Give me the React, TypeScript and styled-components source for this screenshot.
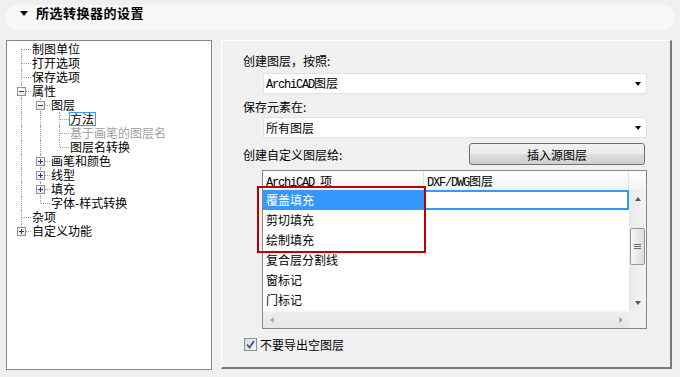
import styled, { createGlobalStyle } from "styled-components";

const GlobalStyle = createGlobalStyle`
  html, body {
    margin: 0;
    padding: 0;
    background: #f0f0f0;
  }
  body {
    font-family: "Noto Sans CJK SC", "Liberation Sans", sans-serif;
    font-size: 12px;
    color: #000;
  }
`;

const Window = styled.div`
  width: 680px;
  height: 377px;
  overflow: hidden;
  background: #f0f0f0;
  display: flex;
  flex-direction: column;
`;

const SectionBar = styled.div`
  margin: 5px 5px 0;
  height: 25px;
  box-sizing: border-box;
  padding-left: 15px;
  border-radius: 12px;
  background: #f7f7f7;
  display: flex;
  align-items: flex-start;
  gap: 8px;
`;

const Caret = styled.span`
  width: 0;
  height: 0;
  margin-top: 6px;
  border-left: 4px solid transparent;
  border-right: 4px solid transparent;
  border-top: 5px solid #000;
`;

const SectionTitle = styled.span`
  font-weight: 700;
  font-size: 13px;
  line-height: 16px;
  letter-spacing: 0.5px;
`;

const Body = styled.div`
  display: flex;
  gap: 9px;
  margin-top: 10px;
  padding-left: 6px;
`;

/* ---------- tree ---------- */

const TreePanel = styled.div`
  width: 206px;
  height: 330px;
  box-sizing: border-box;
  border: 1px solid #828790;
  background: #fff;
  padding: 1px 0 0 5px;
`;

const TreeRow = styled.div`
  display: flex;
  height: 14px;
`;

type Kind = "first" | "tee" | "pipe" | "corner";

const Guide = styled.span<{ $kind: Kind }>`
  position: relative;
  flex: none;
  width: 19px;
  height: 14px;

  &::before {
    content: "";
    position: absolute;
    left: 9px;
    top: ${(p) => (p.$kind === "first" ? "7px" : "0")};
    bottom: ${(p) => (p.$kind === "corner" ? "7px" : "0")};
    border-left: 1px dotted #a0a0a0;
  }

  &::after {
    content: "";
    position: absolute;
    left: 10px;
    right: 0;
    top: 7px;
    border-top: 1px dotted #a0a0a0;
    display: ${(p) => (p.$kind === "pipe" ? "none" : "block")};
  }
`;

const Expander = styled.span<{ $open: boolean }>`
  position: absolute;
  left: 5px;
  top: 3px;
  width: 9px;
  height: 9px;
  box-sizing: border-box;
  border: 1px solid #919191;
  background: linear-gradient(135deg, #ffffff, #e2e2e2);
  z-index: 1;

  &::before {
    content: "";
    position: absolute;
    left: 1px;
    top: 3px;
    width: 5px;
    height: 1px;
    background: #1f3a87;
  }

  &::after {
    content: "";
    position: absolute;
    left: 3px;
    top: 1px;
    width: 1px;
    height: 5px;
    background: #1f3a87;
    display: ${(p) => (p.$open ? "none" : "block")};
  }
`;

const NodeLabel = styled.span<{ $selected?: boolean; $disabled?: boolean }>`
  height: 14px;
  box-sizing: border-box;
  line-height: 12px;
  padding: 0 1px 0 0;
  white-space: nowrap;
  border: 1px solid ${(p) => (p.$selected ? "#3399ff" : "transparent")};
  color: ${(p) => (p.$disabled ? "#a0a0a0" : "#000")};
`;

interface TreeNode {
  label: string;
  guides: Kind[];
  box?: "plus" | "minus";
  selected?: boolean;
  disabled?: boolean;
}

const treeNodes: TreeNode[] = [
  { label: "制图单位", guides: ["first"] },
  { label: "打开选项", guides: ["tee"] },
  { label: "保存选项", guides: ["tee"] },
  { label: "属性", guides: ["tee"], box: "minus" },
  { label: "图层", guides: ["pipe", "tee"], box: "minus" },
  { label: "方法", guides: ["pipe", "pipe", "tee"], selected: true },
  { label: "基于画笔的图层名", guides: ["pipe", "pipe", "tee"], disabled: true },
  { label: "图层名转换", guides: ["pipe", "pipe", "corner"] },
  { label: "画笔和颜色", guides: ["pipe", "tee"], box: "plus" },
  { label: "线型", guides: ["pipe", "tee"], box: "plus" },
  { label: "填充", guides: ["pipe", "tee"], box: "plus" },
  { label: "字体-样式转换", guides: ["pipe", "corner"] },
  { label: "杂项", guides: ["tee"] },
  { label: "自定义功能", guides: ["corner"], box: "plus" },
];

/* ---------- settings panel ---------- */

const SettingsPanel = styled.div`
  width: 451px;
  height: 329px;
  box-sizing: border-box;
  border-style: solid;
  border-width: 1px 2px 2px 1px;
  border-color: #ffffff #7a7a7a #7a7a7a #ffffff;
  padding: 0 23px 0 21px;
  display: flex;
  flex-direction: column;
`;

const FieldLabel = styled.div<{ $top: number; $bottom: number }>`
  height: 14px;
  line-height: 14px;
  margin-top: ${(p) => p.$top}px;
  margin-bottom: ${(p) => p.$bottom}px;
`;

const Select = styled.div`
  margin-left: 20px;
  height: 21px;
  box-sizing: border-box;
  background: #fff;
  border: 1px solid #e1e2e6;
  display: flex;
  align-items: center;
  justify-content: space-between;
  padding: 0 5px 0 2px;
  line-height: 19px;
`;

const SelectArrow = styled.span`
  width: 0;
  height: 0;
  border-left: 3px solid transparent;
  border-right: 3px solid transparent;
  border-top: 4px solid #000;
`;

const Mono = styled.span`
  font-family: "Liberation Mono", monospace;
  letter-spacing: -1.2px;
`;

const ActionRow = styled.div`
  display: flex;
  justify-content: space-between;
  align-items: center;
  height: 22px;
  margin-top: 5px;
`;

const Button = styled.button`
  width: 176px;
  height: 22px;
  margin-right: 2px;
  padding: 0;
  border: 1px solid #707070;
  border-radius: 3px;
  background: linear-gradient(#f2f2f2, #ebebeb 50%, #dddddd 50%, #cfcfcf);
  font-family: inherit;
  font-size: 12px;
  color: #000;
`;

const ListBox = styled.div`
  position: relative;
  margin: 5px 0 0 19px;
  height: 159px;
  box-sizing: border-box;
  border: 1px solid #828790;
  background: #fff;
  display: flex;
  flex-direction: column;
`;

const ListHeader = styled.div`
  display: grid;
  grid-template-columns: 161px 205px 1fr;
  height: 19px;
  flex: none;
  background: linear-gradient(#ffffff, #f2f3f5);
`;

const HeaderCell = styled.div`
  line-height: 19px;
  padding-left: 3px;
  border-right: 1px solid #e3e4e6;
  white-space: nowrap;
`;

const ListMiddle = styled.div`
  flex: 1;
  display: flex;
  min-height: 0;
`;

const ListRows = styled.div`
  flex: 1;
`;

const ListRow = styled.div`
  display: grid;
  grid-template-columns: 161px 1fr;
  height: 20px;
`;

const NameCell = styled.div<{ $active?: boolean }>`
  line-height: 20px;
  padding-left: 3px;
  background: ${(p) => (p.$active ? "#3399ff" : "transparent")};
  color: ${(p) => (p.$active ? "#fff" : "#000")};
`;

const LayerCell = styled.div<{ $editing?: boolean }>`
  box-sizing: border-box;
  border: 2px solid ${(p) => (p.$editing ? "#3399ff" : "transparent")};
`;

const VScroll = styled.div`
  width: 17px;
  flex: none;
  display: flex;
  flex-direction: column;
  background: linear-gradient(to right, #e9e9e9, #f4f4f4);
`;

const ScrollButton = styled.div`
  height: 17px;
  flex: none;
  display: flex;
  align-items: center;
  justify-content: center;
`;

const ArrowGlyph = styled.span<{ $dir: "up" | "down" | "left" | "right"; $color: string }>`
  width: 0;
  height: 0;
  ${(p) =>
    p.$dir === "up"
      ? `border-left: 3px solid transparent; border-right: 3px solid transparent; border-bottom: 4px solid ${p.$color};`
      : p.$dir === "down"
      ? `border-left: 3px solid transparent; border-right: 3px solid transparent; border-top: 4px solid ${p.$color};`
      : p.$dir === "left"
      ? `border-top: 3px solid transparent; border-bottom: 3px solid transparent; border-right: 4px solid ${p.$color};`
      : `border-top: 3px solid transparent; border-bottom: 3px solid transparent; border-left: 4px solid ${p.$color};`}
`;

const ScrollTrack = styled.div`
  flex: 1;
  padding-top: 21px;
`;

const Thumb = styled.div`
  margin: 0 1px;
  height: 37px;
  box-sizing: border-box;
  border: 1px solid #979797;
  border-radius: 2px;
  background: linear-gradient(to right, #f6f6f6, #dcdcdc);
  display: flex;
  align-items: center;
  justify-content: center;
`;

const Grip = styled.span`
  width: 7px;
  height: 5px;
  background: repeating-linear-gradient(#6e6e6e 0 1px, transparent 1px 2px);
`;

const HScroll = styled.div`
  height: 17px;
  flex: none;
  display: flex;
`;

const HTrack = styled.div`
  flex: 1;
  display: flex;
  justify-content: space-between;
  align-items: center;
  padding: 0 6px 0 7px;
  background: linear-gradient(#eeeeee, #e7e7e7);
  border-top: 1px solid #f6f6f6;
`;

const ScrollCorner = styled.div`
  width: 17px;
  background: #f0f0f0;
`;

const Highlight = styled.div`
  position: absolute;
  left: -6px;
  top: 15px;
  width: 169px;
  height: 67px;
  box-sizing: border-box;
  border: 2px solid #c00000;
  pointer-events: none;
`;

const CheckRow = styled.label`
  display: flex;
  align-items: center;
  gap: 3px;
  margin: 9px 0 0 1px;
  height: 13px;
  line-height: 13px;
`;

const CheckBox = styled.span`
  width: 13px;
  height: 13px;
  box-sizing: border-box;
  border: 1px solid #8e8f8f;
  background: linear-gradient(135deg, #d8d9dc, #f7f7f7);
  display: flex;
  align-items: center;
  justify-content: center;
`;

const layerRows = ["覆盖填充", "剪切填充", "绘制填充", "复合层分割线", "窗标记", "门标记"];

export default function App() {
  return (
    <Window>
      <GlobalStyle />
      <SectionBar>
        <Caret />
        <SectionTitle>所选转换器的设置</SectionTitle>
      </SectionBar>
      <Body>
        <TreePanel>
          {treeNodes.map((node) => (
            <TreeRow key={node.label}>
              {node.guides.map((kind, i) => (
                <Guide key={i} $kind={kind}>
                  {node.box && i === node.guides.length - 1 && (
                    <Expander $open={node.box === "minus"} />
                  )}
                </Guide>
              ))}
              <NodeLabel $selected={node.selected} $disabled={node.disabled}>
                {node.label}
              </NodeLabel>
            </TreeRow>
          ))}
        </TreePanel>

        <SettingsPanel>
          <FieldLabel $top={13} $bottom={5}>创建图层，按照:</FieldLabel>
          <Select>
            <span>
              <Mono>ArchiCAD</Mono>图层
            </span>
            <SelectArrow />
          </Select>
          <FieldLabel $top={6} $bottom={3}>保存元素在:</FieldLabel>
          <Select>
            <span>所有图层</span>
            <SelectArrow />
          </Select>
          <ActionRow>
            <span>创建自定义图层给:</span>
            <Button>插入源图层</Button>
          </ActionRow>
          <ListBox>
            <ListHeader>
              <HeaderCell>
                <Mono>ArchiCAD </Mono>项
              </HeaderCell>
              <HeaderCell>
                <Mono>DXF/DWG</Mono>图层
              </HeaderCell>
              <div />
            </ListHeader>
            <ListMiddle>
              <ListRows>
                {layerRows.map((name, i) => (
                  <ListRow key={name}>
                    <NameCell $active={i === 0}>{name}</NameCell>
                    <LayerCell $editing={i === 0} />
                  </ListRow>
                ))}
              </ListRows>
              <VScroll>
                <ScrollButton>
                  <ArrowGlyph $dir="up" $color="#555" />
                </ScrollButton>
                <ScrollTrack>
                  <Thumb>
                    <Grip />
                  </Thumb>
                </ScrollTrack>
                <ScrollButton>
                  <ArrowGlyph $dir="down" $color="#555" />
                </ScrollButton>
              </VScroll>
            </ListMiddle>
            <HScroll>
              <HTrack>
                <ArrowGlyph $dir="left" $color="#a8a8a8" />
                <ArrowGlyph $dir="right" $color="#a8a8a8" />
              </HTrack>
              <ScrollCorner />
            </HScroll>
            <Highlight />
          </ListBox>
          <CheckRow>
            <CheckBox>
              <svg width="9" height="9" viewBox="0 0 9 9">
                <path d="M1 4.5 L3.5 7.5 L8 1" fill="none" stroke="#3b52a0" strokeWidth="1.8" />
              </svg>
            </CheckBox>
            <span>不要导出空图层</span>
          </CheckRow>
        </SettingsPanel>
      </Body>
    </Window>
  );
}
